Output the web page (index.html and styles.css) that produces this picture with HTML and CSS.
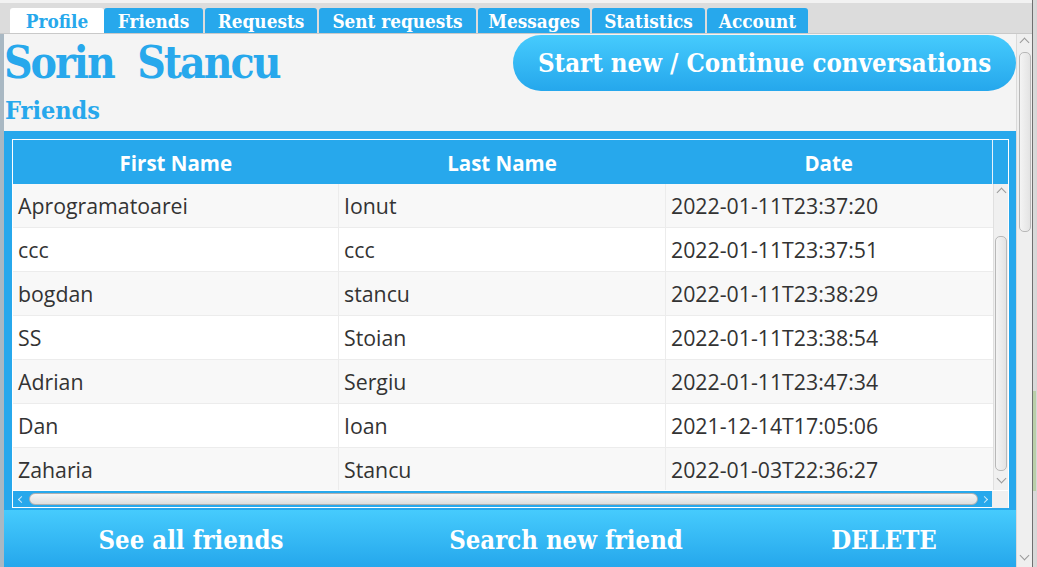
FILE: index.html
```html
<!DOCTYPE html>
<html>
<head>
<meta charset="utf-8">
<link rel="stylesheet" href="styles.css">
</head>
<body>
<div class="screen">
  <div class="app">
    <div class="tabbar">
      <div class="tab t1 active">Profile</div>
      <div class="tab t2">Friends</div>
      <div class="tab t3">Requests</div>
      <div class="tab t4">Sent requests</div>
      <div class="tab t5">Messages</div>
      <div class="tab t6">Statistics</div>
      <div class="tab t7">Account</div>
    </div>
    <div class="body">
      <div class="edge"></div>
      <div class="content">
        <div class="head">
          <div class="titles">
            <div class="name">Sorin  Stancu</div>
            <div class="sub">Friends</div>
          </div>
          <div class="pill">Start new / Continue conversations</div>
        </div>
        <div class="frame">
          <div class="table">
            <div class="thead">
              <div class="th">First Name</div>
              <div class="th">Last Name</div>
              <div class="th">Date</div>
              <div class="th corner"></div>
            </div>
            <div class="tbody">
              <div class="rows">
                <div class="row odd"><div class="td">Aprogramatoarei</div><div class="td">Ionut</div><div class="td">2022-01-11T23:37:20</div></div>
                <div class="row"><div class="td">ccc</div><div class="td">ccc</div><div class="td">2022-01-11T23:37:51</div></div>
                <div class="row odd"><div class="td">bogdan</div><div class="td">stancu</div><div class="td">2022-01-11T23:38:29</div></div>
                <div class="row"><div class="td">SS</div><div class="td">Stoian</div><div class="td">2022-01-11T23:38:54</div></div>
                <div class="row odd"><div class="td">Adrian</div><div class="td">Sergiu</div><div class="td">2022-01-11T23:47:34</div></div>
                <div class="row"><div class="td">Dan</div><div class="td">Ioan</div><div class="td">2021-12-14T17:05:06</div></div>
                <div class="row odd"><div class="td">Zaharia</div><div class="td">Stancu</div><div class="td">2022-01-03T22:36:27</div></div>
              </div>
              <div class="vbar">
                <div class="arrow up"></div>
                <div class="vthumb"></div>
                <div class="arrow down"></div>
              </div>
            </div>
            <div class="hbar">
              <div class="harrow left"></div>
              <div class="hthumb"></div>
              <div class="harrow right"></div>
              <div class="hcorner"></div>
            </div>
          </div>
        </div>
        <div class="actions">
          <div class="act">See all friends</div>
          <div class="act">Search new friend</div>
          <div class="act">DELETE</div>
        </div>
      </div>
      <div class="outer-scroll">
        <div class="arrow up"></div>
        <div class="othumb"></div>
        <div class="spacer"></div>
        <div class="arrow down"></div>
      </div>
    </div>
  </div>
  <div class="outside">
    <div class="green"></div>
  </div>
</div>
</body>
</html>
```

FILE: styles.css
```css
* { box-sizing: border-box; }
html, body { margin: 0; padding: 0; }
body { width: 1037px; height: 567px; overflow: hidden; background: #d6d6d6; }

.screen { display: flex; height: 567px; }
.app { width: 1033px; display: flex; flex-direction: column; border-right: 1px solid #6f6f6f; }

.tabbar {
  height: 34px;
  background: linear-gradient(#f2f2f2 0, #f2f2f2 3px, #dcdcdc 3px, #dcdcdc 100%);
  display: flex;
  align-items: flex-end;
  padding-left: 10px;
  border-bottom: 1px solid #c9c9c9;
}
.tab {
  height: 25px;
  background: #27a8ec;
  color: #fff;
  font-family: "DejaVu Serif Condensed", "DejaVu Serif", serif;
  font-stretch: condensed;
  font-weight: bold;
  font-size: 18.8px;
  line-height: 26px;
  text-align: center;
  border-radius: 3px 3px 0 0;
  margin-right: 2px;
}
.tab.active { background: #fff; color: #27a8ec; margin-right: 0; }
.t1 { width: 94px; }
.t2 { width: 99px; }
.t3 { width: 112px; }
.t4 { width: 157px; }
.t5 { width: 112px; }
.t6 { width: 113px; }
.t7 { width: 101px; }

.body { flex: 1; display: flex; }
.edge { width: 4px; background: #a9b8c3; }
.content { width: 1012px; background: #f4f4f4; display: flex; flex-direction: column; }

.head { display: flex; justify-content: space-between; height: 97px; }
.titles { padding-left: 0; }
.name {
  white-space: pre;
  font-family: "DejaVu Serif Condensed", "DejaVu Serif", serif;
  font-stretch: condensed;
  font-weight: bold;
  font-size: 44px;
  color: #27a8ec;
  line-height: 58px;
  letter-spacing: -2px;
}
.sub {
  font-family: "DejaVu Serif Condensed", "DejaVu Serif", serif;
  font-stretch: condensed;
  font-weight: bold;
  font-size: 25px;
  color: #27a8ec;
  line-height: 30px;
  margin-top: 4px;
  padding-left: 1px;
}
.pill {
  width: 503px;
  height: 56px;
  margin-top: 1px;
  border-radius: 28px;
  background: linear-gradient(#46cbfd, #25a7ec);
  color: #fff;
  font-family: "DejaVu Serif Condensed", "DejaVu Serif", serif;
  font-stretch: condensed;
  font-weight: bold;
  font-size: 25.6px;
  display: flex;
  align-items: center;
  justify-content: center;
}

.frame { background: #27a8ec; padding: 8px 7px 2px 8px; height: 379px; }
.table { border: 1px solid #fff; height: 100%; display: flex; flex-direction: column; background: #fff; }
.thead { display: flex; height: 45px; background: #27a8ec; }
.th {
  width: 327px;
  color: #fff;
  font-family: "Open Sans", "Noto Sans", sans-serif;
  font-weight: bold;
  font-size: 20.5px;
  padding-top: 2px;
  display: flex; align-items: center; justify-content: center;
}
.th:first-child { width: 326px; }
.th.corner { width: 16px; border-left: 1px solid #e7f3fb; }

.tbody { display: flex; height: 306px; }
.rows { width: 980px; }
.row { display: flex; height: 44px; border-bottom: 1px solid #ececec; background: #fff; }
.row.odd { background: #f8f8f8; }
.row:last-child { border-bottom: none; height: 42px; }
.td {
  width: 327px;
  border-right: 1px solid #ececec;
  padding-left: 5px;
  font-family: "Open Sans", "Noto Sans", sans-serif;
  font-size: 21.3px;
  color: #333;
  display: flex; align-items: center;
}
.td:first-child { width: 326px; }
.td:last-child { border-right: none; }

.vbar { width: 16px; background: #f0f0f0; border-left: 1px solid #e0e0e0; display: flex; flex-direction: column; align-items: center; }
.vthumb { width: 12px; flex: 1; margin: 40px 0 4px; border: 1px solid #b8b8b8; border-radius: 5px; background: linear-gradient(90deg, #f4f4f4, #e3e3e3); }
.arrow { width: 7px; height: 7px; border-left: 1px solid #9a9a9a; border-top: 1px solid #9a9a9a; }
.arrow.up { transform: rotate(45deg); margin-top: 5px; }
.arrow.down { transform: rotate(225deg); margin-bottom: 8px; }

.hbar { height: 17px; display: flex; align-items: center; background: #27a8ec; border-top: 1px solid #fff; }
.harrow { width: 5px; height: 5px; border-left: 1px solid #cfe9f8; border-top: 1px solid #cfe9f8; }
.harrow.left { transform: rotate(-45deg); margin: 0 5px 0 6px; }
.harrow.right { transform: rotate(135deg); margin: 0 5px 0 4px; }
.hthumb { flex: 1; height: 12px; border-radius: 6px; border: 1px solid #b0b0b0; background: linear-gradient(#f6f6f6, #dedede); }
.hcorner { width: 16px; height: 17px; background: #f0f0f0; }

.actions {
  flex: 1;
  background: linear-gradient(#46cbfd, #25a7ec);
  display: flex;
  align-items: center;
  font-family: "DejaVu Serif Condensed", "DejaVu Serif", serif;
  font-stretch: condensed;
  font-weight: bold;
  font-size: 25.5px;
  color: #fff;
}
.act { text-align: center; padding-top: 2px; }
.act:nth-child(1) { width: 374px; }
.act:nth-child(2) { width: 376px; }
.act:nth-child(3) { width: 260px; }

.outer-scroll { width: 16px; background: #efefef; border-left: 1px solid #dadada; display: flex; flex-direction: column; align-items: center; }
.othumb { width: 12px; height: 180px; margin-top: 6px; border: 1px solid #b8b8b8; border-radius: 5px; background: linear-gradient(90deg, #f4f4f4, #e3e3e3); }
.spacer { flex: 1; }

.outside { width: 3px; background: #d9d9d9; display: flex; flex-direction: column; }
.green { margin-top: 391px; height: 100px; background: #b9cfa9; }
```
